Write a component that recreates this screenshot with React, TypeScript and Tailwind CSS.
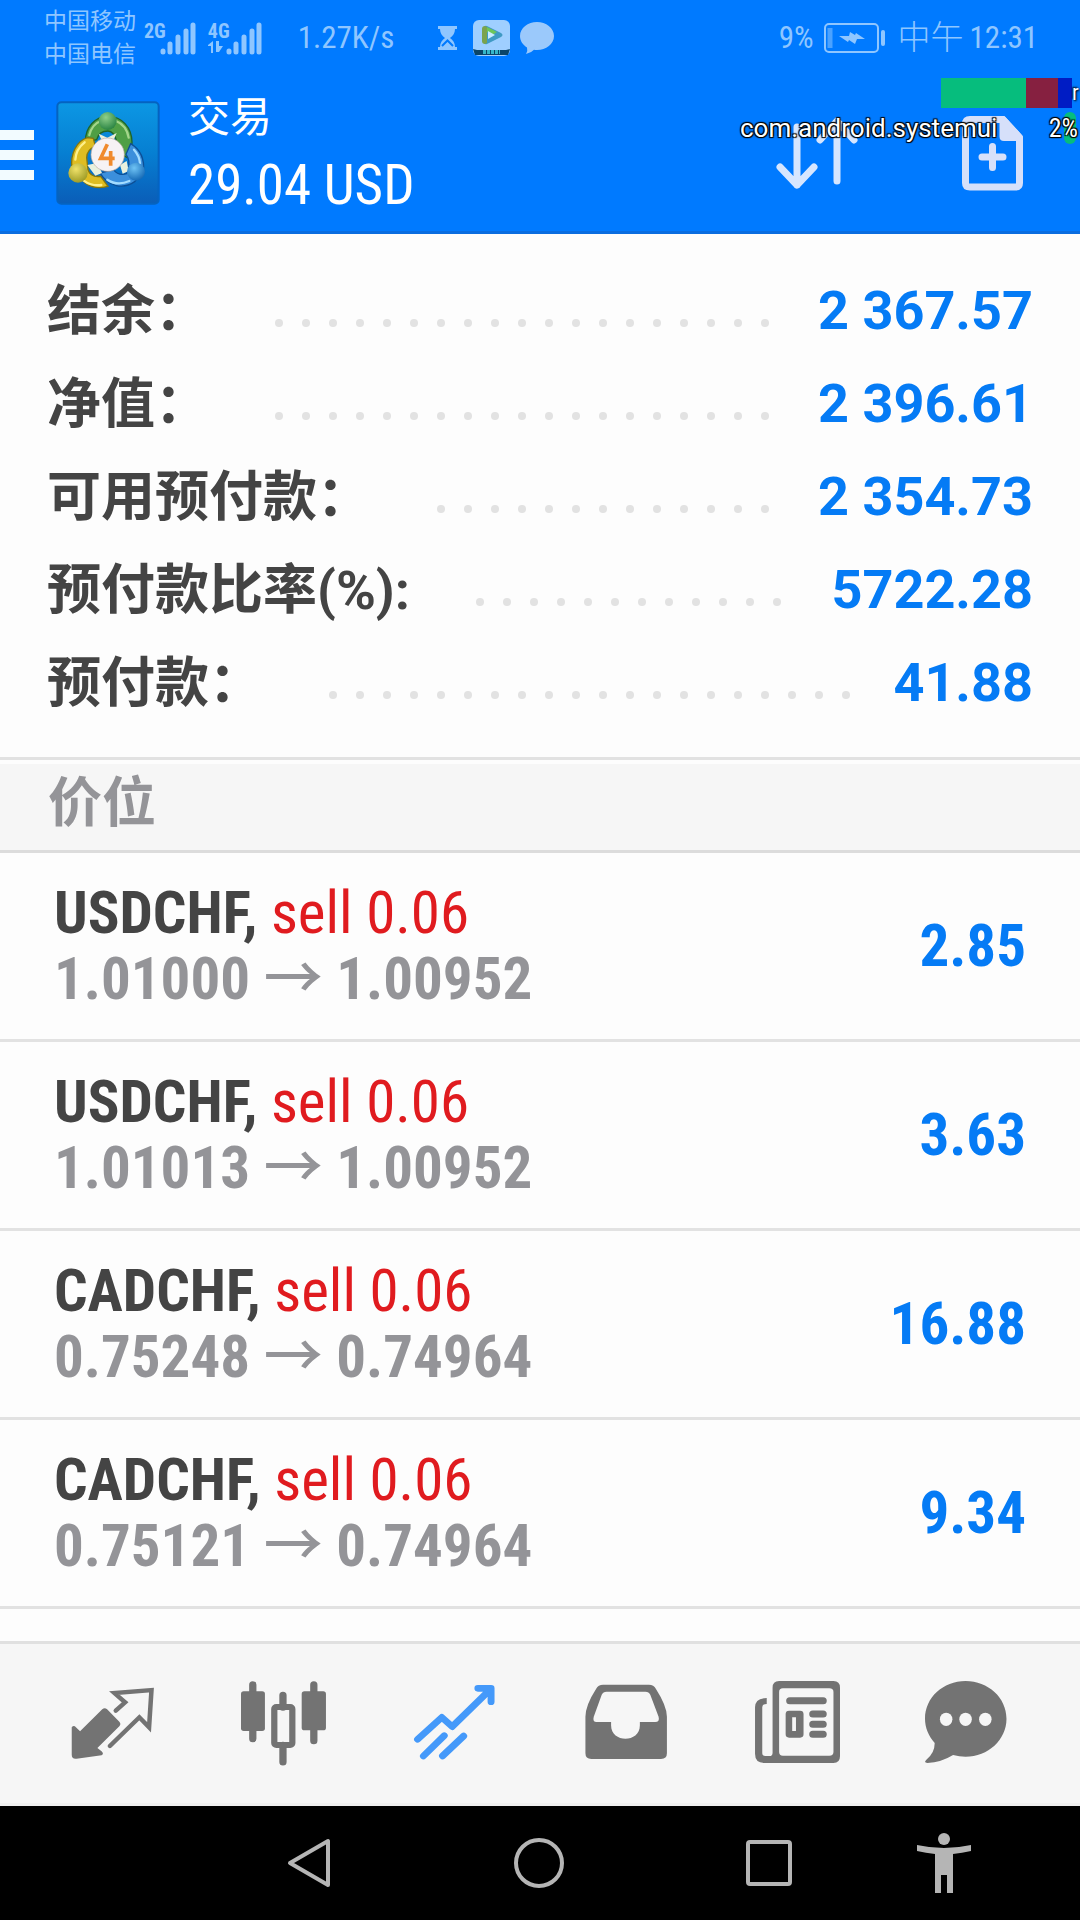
import type { ReactNode } from 'react';

// ============================================================
// DATA
// ============================================================

interface SummaryItem {
  label: string;
  value: string;
}

interface Position {
  id: number;
  symbol: string;
  side: string;
  volume: string;
  open: string;
  current: string;
  profit: string;
}

const SUMMARY: SummaryItem[] = [
  { label: '结余：', value: '2 367.57' },
  { label: '净值：', value: '2 396.61' },
  { label: '可用预付款：', value: '2 354.73' },
  { label: '预付款比率(%):', value: '5722.28' },
  { label: '预付款：', value: '41.88' },
];

const POSITIONS: Position[] = [
  { id: 1, symbol: 'USDCHF', side: 'sell', volume: '0.06', open: '1.01000', current: '1.00952', profit: '2.85' },
  { id: 2, symbol: 'USDCHF', side: 'sell', volume: '0.06', open: '1.01013', current: '1.00952', profit: '3.63' },
  { id: 3, symbol: 'CADCHF', side: 'sell', volume: '0.06', open: '0.75248', current: '0.74964', profit: '16.88' },
  { id: 4, symbol: 'CADCHF', side: 'sell', volume: '0.06', open: '0.75121', current: '0.74964', profit: '9.34' },
];

// ============================================================
// STATUS BAR
// ============================================================

function SignalBars() {
  return (
    <svg width="36" height="34" viewBox="0 0 36 34" stroke="currentColor" strokeWidth="5" strokeLinecap="round">
      <path d="M3 30v1M10 23v8M18 16v15M26 10v21M33 4v27" />
    </svg>
  );
}

function StatusBar() {
  return (
    <div className="flex h-[75px] items-center justify-between pr-[42px] pl-11 font-['Roboto_Condensed','Roboto','Noto_Sans_CJK_SC',sans-serif] text-[#8fc6ff]">
      <div className="flex items-center">
        <div className="text-[23px] leading-[33px]">
          <p>中国移动</p>
          <p>中国电信</p>
        </div>
        <div className="ml-2 flex">
          <span className="-mr-1.5 text-[20px] leading-[20px] font-bold">2G</span>
          <SignalBars />
        </div>
        <div className="ml-3 flex">
          <div className="-mr-1 flex flex-col">
            <span className="text-[20px] leading-[20px] font-bold">4G</span>
            <svg width="16" height="12" viewBox="0 0 16 12" fill="currentColor">
              <path d="M0 4 5 0v12H3V5H0zM8 0h3v5h4l-4 6H8z" />
            </svg>
          </div>
          <SignalBars />
        </div>
        <span className="ml-9 text-[31px] leading-10">1.27K/s</span>
        <svg className="ml-11" width="19" height="24" viewBox="0 0 19 24" fill="currentColor">
          <path d="M0 0h19v3h-2c0 4-2 7-5 9 3 2 5 5 5 9h2v3H0v-3h2c0-4 2-7 5-9-3-2-5-5-5-9H0z" />
          <path d="M4 20l5.500-5.500L15 20" fill="none" stroke="#007aff" strokeWidth="2" />
        </svg>
        <svg className="ml-4" width="37" height="36" viewBox="0 0 37 36">
          <rect width="37" height="36" rx="6" fill="#9fcfff" />
          <path d="M11 8q0-3 3-2l14 7q3 2 0 4l-14 7q-3 1-3-2z" fill="#3f9ac4" />
          <path d="M9 9q0-3 3-3l2 1v16l-2 1q-3 0-3-3z" fill="#7ba34d" />
          <path d="M14 7l10 5-5 3-5-3z" fill="#6cc65a" />
          <path d="M15 11l7 4-7 4z" fill="#c9ecff" />
          <path d="M0 29l4 1h29l4-1-2 6H2z" fill="#0a4568" />
          <path d="M10 32h17" stroke="#35b6c8" strokeWidth="4" strokeDasharray="3 1" />
        </svg>
        <svg className="ml-2.5" width="34" height="32" viewBox="0 0 34 32" fill="#9bc9fb">
          <path d="M17 0c9 0 17 6 17 14s-8 14-17 14q-2 0-3-.3Q11 31 6 32q2-3 1-6.500C3 23 0 19 0 14 0 6 8 0 17 0z" />
        </svg>
      </div>
      <div className="flex items-center text-[31px] leading-10">
        <span>9%</span>
        <svg className="ml-2.5" width="62" height="30" viewBox="0 0 62 30" fill="none" stroke="currentColor" strokeWidth="2">
          <rect x="1" y="1" width="53" height="28" rx="4" />
          <path d="M6 5v20" stroke="#4ba2ff" strokeWidth="5" />
          <path d="M15 13l10 0 1-4 5 3 1-2 9 6-8 0-2 5-6-4-1 2z" fill="currentColor" stroke="none" />
          <path d="M59 9v12" strokeWidth="4" strokeLinecap="round" />
        </svg>
        <span className="ml-3 text-[33px] font-light">中午</span>
        <span className="ml-1.5">12:31</span>
      </div>
    </div>
  );
}

// ============================================================
// HEADER
// ============================================================

function AppLogo() {
  return (
    <svg width="104" height="104" viewBox="168 302 312 312" aria-hidden="true">
      <defs>
        <linearGradient id="logo-bg" x1="0" y1="0" x2="0" y2="1">
          <stop offset="0" stopColor="#0c97e4" />
          <stop offset="0.5" stopColor="#067fd2" />
          <stop offset="1" stopColor="#0a5db8" />
        </linearGradient>
        <radialGradient id="logo-green" cx="0.4" cy="0.3" r="0.8">
          <stop offset="0" stopColor="#8fd08a" />
          <stop offset="1" stopColor="#1d7a3a" />
        </radialGradient>
        <radialGradient id="logo-gold" cx="0.4" cy="0.3" r="0.8">
          <stop offset="0" stopColor="#f0e26a" />
          <stop offset="1" stopColor="#93921c" />
        </radialGradient>
        <radialGradient id="logo-blue" cx="0.4" cy="0.3" r="0.8">
          <stop offset="0" stopColor="#6fc3f5" />
          <stop offset="1" stopColor="#0b5fae" />
        </radialGradient>
      </defs>
      <rect x="172" y="306" width="304" height="304" rx="12" fill="url(#logo-bg)" stroke="#0563c0" strokeWidth="6" />
      {/* Three interlocked figures */}
      <path d="M256 424c0-44 30-76 68-76 42 0 72 34 72 78q0 24-14 46l-34-20q6-14 2-28-8-32-26-32c-20 0-30 10-34 26z" fill="#4f9f45" stroke="#1f6428" strokeWidth="4" />
      <path d="M262 412c-32 10-52 48-46 92l22 20c16 36 52 44 86 34l-22-30q-30 4-38-20l-4-36q0-24 26-34l-6-24z" fill="#dfbd22" stroke="#84750f" strokeWidth="4" />
      <path d="M392 430c30 18 42 48 38 84l-26 30c-34 24-78 16-104-26l40-10q16 20 40 12l4-12q8-28-6-46z" fill="#3b8fdc" stroke="#0c4f96" strokeWidth="4" />
      <path d="M296 400l26 12 28-14-14 32h-26zM262 494l30-6 14 30-20 8zM360 494l20-12 6 30-18 8z" fill="#e9f0dd" />
      <g fill="none" strokeLinecap="round">
        <path d="M268 404c6-24 18-36 34-42M348 362c20 8 34 26 38 50" stroke="#a5d68a" strokeWidth="7" />
        <path d="M226 478q2-32 28-52M250 540q24 18 54 14" stroke="#fff08a" strokeWidth="7" />
        <path d="M402 448q16 18 18 40M322 538q30 20 66 4" stroke="#a3dcff" strokeWidth="7" />
      </g>
      <circle cx="323" cy="362" r="27" fill="url(#logo-green)" />
      <circle cx="234" cy="518" r="29" fill="url(#logo-gold)" />
      <circle cx="408" cy="514" r="27" fill="url(#logo-blue)" />
      <circle cx="323" cy="463" r="50" fill="#f6f2f4" stroke="#b9a9a0" strokeWidth="2" />
      <path d="M322 432l-20 42h42M332 452v44" fill="none" stroke="#f08a2c" strokeWidth="11" />
    </svg>
  );
}

function DebugOverlay() {
  return (
    <div className="pointer-events-none absolute top-[78px] right-0 w-[344px]">
      <div className="ml-auto flex h-[30px] w-[139px] font-['Roboto_Condensed','Roboto',sans-serif] text-[22px] leading-[30px] text-white">
        <span className="w-[85px] shrink-0 bg-[#06bd7d]" />
        <span className="w-8 shrink-0 bg-[#862040]" />
        <span className="w-3.5 shrink-0 bg-[#001cc4]" />
        <span className="[text-shadow:1px_1px_2px_#000,-1px_-1px_2px_#000]">r</span>
      </div>
      <div className="mt-1 flex h-8 items-center justify-between pr-0.5 pl-1 text-[26px] leading-8 text-white [text-shadow:1px_1px_1px_#000,-1px_-1px_1px_#000,1px_-1px_1px_#000,-1px_1px_1px_#000]">
        <span>com.android.systemui</span>
        <span className="relative font-['Roboto_Condensed','Roboto',sans-serif]">
          <span className="absolute top-0 right-0.5 -z-10 h-8 w-3 rounded-full bg-[#06bd7d]" />
          2%
        </span>
      </div>
    </div>
  );
}

function Header() {
  return (
    <header className="relative z-0 border-b-[3px] border-[#0a6de0] bg-[#007aff]">
      <StatusBar />
      <div className="flex h-[156px] items-center pr-[57px] text-white">
        <button type="button" aria-label="Menu" className="flex w-[34px] flex-col gap-2.5 pt-1">
          <span className="h-2.5 w-full bg-[#f2fbff]" />
          <span className="h-2.5 w-full bg-[#f2fbff]" />
          <span className="h-2.5 w-full bg-[#f2fbff]" />
        </button>
        <div className="ml-[22px]">
          <AppLogo />
        </div>
        <div className="ml-7 flex-1 pt-1">
          <h1 className="text-[42px] leading-[60px]">交易</h1>
          <p className="font-['Roboto_Condensed','Roboto',sans-serif] text-[55px] leading-[74px]">29.04 USD</p>
        </div>
        <button type="button" aria-label="Sort" className="mr-[104px] text-[#d6e6ff]">
          <svg width="82" height="76" viewBox="0 0 82 76" fill="none" stroke="currentColor" strokeWidth="7" strokeLinecap="round" strokeLinejoin="round">
            <path d="M21 12v58M4 52l17 18 17-18M61 66V8M44 25L61 6l17 19" />
          </svg>
        </button>
        <button type="button" aria-label="New order" className="text-[#d6e0fa]">
          <svg width="61" height="75" viewBox="0 0 61 75" fill="none" stroke="currentColor" strokeWidth="7" strokeLinejoin="round">
            <path d="M8 3.500h33l16.500 18V67q0 4-4 4H8q-4.500 0-4.500-4V8q0-4.500 4.500-4.500z" />
            <path d="M41 3.500v17q0 1 1 1h15.500z" fill="currentColor" />
            <path d="M20 41h21M30.500 30.500v21" strokeWidth="7" strokeLinecap="round" />
          </svg>
        </button>
      </div>
      <DebugOverlay />
    </header>
  );
}

// ============================================================
// ACCOUNT SUMMARY
// ============================================================

function DotLeader() {
  return (
    <span aria-hidden="true" className="mt-6 mr-4 ml-[66px] flex h-2 flex-1 flex-wrap overflow-hidden">
      {Array.from({ length: 40 }, (_, i) => (
        <span key={i} className="h-2 w-[27px]">
          <span className="block size-2 rounded-full bg-[#e2e2e2]" />
        </span>
      ))}
    </span>
  );
}

function Summary() {
  return (
    <dl className="border-b-[3px] border-[#e2e2e2] px-[47px] pt-[30px] pb-7 text-[54px] font-bold">
      {SUMMARY.map((item) => (
        <div key={item.label} className="flex h-[93px] items-center leading-[89px]">
          <dt className="pt-0.5 text-[#444444]">{item.label}</dt>
          <DotLeader />
          <dd className="text-[#057bf5]">{item.value}</dd>
        </div>
      ))}
    </dl>
  );
}

// ============================================================
// POSITIONS
// ============================================================

function PositionRow({ position }: { position: Position }) {
  return (
    <li className="flex h-[189px] items-center justify-between border-b-[3px] border-[#e2e2e2] px-[54px] font-['Roboto_Condensed','Roboto','Noto_Sans_CJK_SC',sans-serif] text-[59px] leading-[66px] font-bold">
      <div>
        <p className="text-[#444444]">
          {position.symbol}, <span className="font-normal text-[#e01b1f]">{position.side} {position.volume}</span>
        </p>
        <p className="text-[#949498]">
          {position.open} <span className="font-medium">→</span> {position.current}
        </p>
      </div>
      <span className="text-[#057bf5]">{position.profit}</span>
    </li>
  );
}

// ============================================================
// BOTTOM TABS
// ============================================================

function TabIcon({ viewBox, children }: { viewBox: string; children: ReactNode }) {
  return (
    <svg width="86" height="86" viewBox={viewBox} preserveAspectRatio="none" fill="currentColor" stroke="none">
      {children}
    </svg>
  );
}

const TABS = [
  {
    name: 'Quotes',
    icon: (
      <TabIcon viewBox="204 150 248 258">
        <path d="M209 292q6-8 12 0l12 12 64-66q7-7 14 0l36 38q5 6 0 12l-64 66 12 10q8 8 0 12l-72 10q-14 2-14-12z" />
        <path d="M336 242l27-25-31-28 107-9-7 112-28-30-85 86" fill="none" stroke="currentColor" strokeWidth="13" strokeLinecap="round" />
      </TabIcon>
    ),
  },
  {
    name: 'Charts',
    icon: (
      <TabIcon viewBox="700 150 248 258">
        <path d="M734 164v162M910 164v168M821 196v36M821 346v50" stroke="currentColor" strokeWidth="21" strokeLinecap="round" />
        <rect x="700" y="184" width="69" height="119" rx="8" />
        <rect x="875" y="184" width="70" height="117" rx="8" />
        <rect x="796" y="231" width="52" height="114" rx="6" fill="none" stroke="currentColor" strokeWidth="18" />
      </TabIcon>
    ),
  },
  {
    name: 'Trade',
    icon: (
      <TabIcon viewBox="1196 150 248 258">
        <path d="M1212 328l70-66 30 28 110-112M1386 175h38v40M1229 378l60-61M1284 378l61-60" fill="none" stroke="currentColor" strokeWidth="20" strokeLinecap="round" strokeLinejoin="round" />
      </TabIcon>
    ),
  },
  {
    name: 'History',
    icon: (
      <TabIcon viewBox="126 150 248 258">
        <path fillRule="evenodd" d="M184 164h132q14 0 20 12 32 52 32 84v110q0 17-17 17H150q-17 0-17-17V260q0-34 31-84 6-12 20-12zM194 185q-10 0-14 9l-23 66q-4 16 8 16h42v10c0 54 83 54 83 0v-10h44q14 0 10-16l-24-66q-4-9-14-9z" />
      </TabIcon>
    ),
  },
  {
    name: 'News',
    icon: (
      <TabIcon viewBox="624 150 250 258">
        <path fillRule="evenodd" d="M697 153h158q19 0 19 20v206q0 20-19 20H655q-28 0-28-28V232q0-28 34-28v18q-13 0-13 10v138q0 8 9 8h12q9 0 9-10V173q0-20 19-20zM708 175q-11 0-11 11v180q0 11 11 11h135q12 0 12-11V186q0-11-12-11z" />
        <path d="M728 212h97M795 252h30M795 283h30M795 313h30" stroke="currentColor" strokeWidth="21" strokeLinecap="round" />
        <path fillRule="evenodd" d="M726 242h32q10 0 10 10v61q0 10-10 10h-32q-10 0-10-10v-61q0-10 10-10zM735 262v41h11v-41z" />
      </TabIcon>
    ),
  },
  {
    name: 'Messages',
    icon: (
      <TabIcon viewBox="1117 150 248 258">
        <path d="M1234 153c65 0 118 50 118 113s-53 114-118 114q-18 0-36-5-34 22-74 24-12-1-3-10 24-20 24-50c-18-22-28-46-28-73 0-63 52-113 117-113z" />
        <g className="fill-[#f6f6f6]">
          <ellipse cx="1178" cy="268" rx="18" ry="20" />
          <ellipse cx="1234" cy="268" rx="18" ry="20" />
          <ellipse cx="1291" cy="268" rx="18" ry="20" />
        </g>
      </TabIcon>
    ),
  },
];

function TabBar() {
  return (
    <nav className="flex h-[165px] items-center border-t-[3px] border-b-[3px] border-t-[#e0e0e0] border-b-[#f0f0f0] bg-[#f6f6f6] px-[27px] pb-0.5">
      {TABS.map((tab) => (
        <button
          key={tab.name}
          type="button"
          aria-label={tab.name}
          className={tab.name === 'Trade' ? 'flex flex-1 justify-center text-[#4499fa]' : 'flex flex-1 justify-center text-[#737373]'}
        >
          {tab.icon}
        </button>
      ))}
    </nav>
  );
}

function SystemNav() {
  return (
    <nav className="grid h-[114px] grid-cols-[230fr_230fr_230fr_120fr] items-center justify-items-center bg-black pr-[76px] pl-[194px] text-[#b5b5b5]">
      <button type="button" aria-label="Back">
        <svg width="44" height="50" viewBox="0 0 44 50" fill="none" stroke="currentColor" strokeWidth="4" strokeLinejoin="round">
          <path d="M41 3v44L3 25z" />
        </svg>
      </button>
      <button type="button" aria-label="Home">
        <svg width="50" height="50" viewBox="0 0 50 50" fill="none" stroke="currentColor" strokeWidth="4">
          <circle cx="25" cy="25" r="23" />
        </svg>
      </button>
      <button type="button" aria-label="Recent apps">
        <svg width="46" height="46" viewBox="0 0 46 46" fill="none" stroke="currentColor" strokeWidth="4">
          <rect x="2" y="2" width="42" height="42" rx="2" />
        </svg>
      </button>
      <button type="button" aria-label="Accessibility">
        <svg width="54" height="60" viewBox="0 0 54 60" fill="currentColor">
          <circle cx="27" cy="6" r="6" />
          <path d="M0 12q27 6 54 0v6q-9 2-18 3v39h-6V42h-6v18h-6V21q-9-1-18-3z" />
        </svg>
      </button>
    </nav>
  );
}

// ============================================================
// PAGE
// ============================================================

export default function App() {
  return (
    <div className="flex min-h-screen flex-col overflow-hidden bg-[#fdfdfd] font-['Roboto','Noto_Sans_CJK_SC',sans-serif]">
      <Header />
      <main className="flex-1">
        <Summary />
        <h2 className="mt-1 h-[89px] border-b-[3px] border-[#dcdcdc] bg-[#f6f6f6] pl-12 text-[54px] leading-[80px] font-bold text-[#949498]">价位</h2>
        <ul>
          {POSITIONS.map((position) => (
            <PositionRow key={position.id} position={position} />
          ))}
        </ul>
      </main>
      <TabBar />
      <SystemNav />
    </div>
  );
}
